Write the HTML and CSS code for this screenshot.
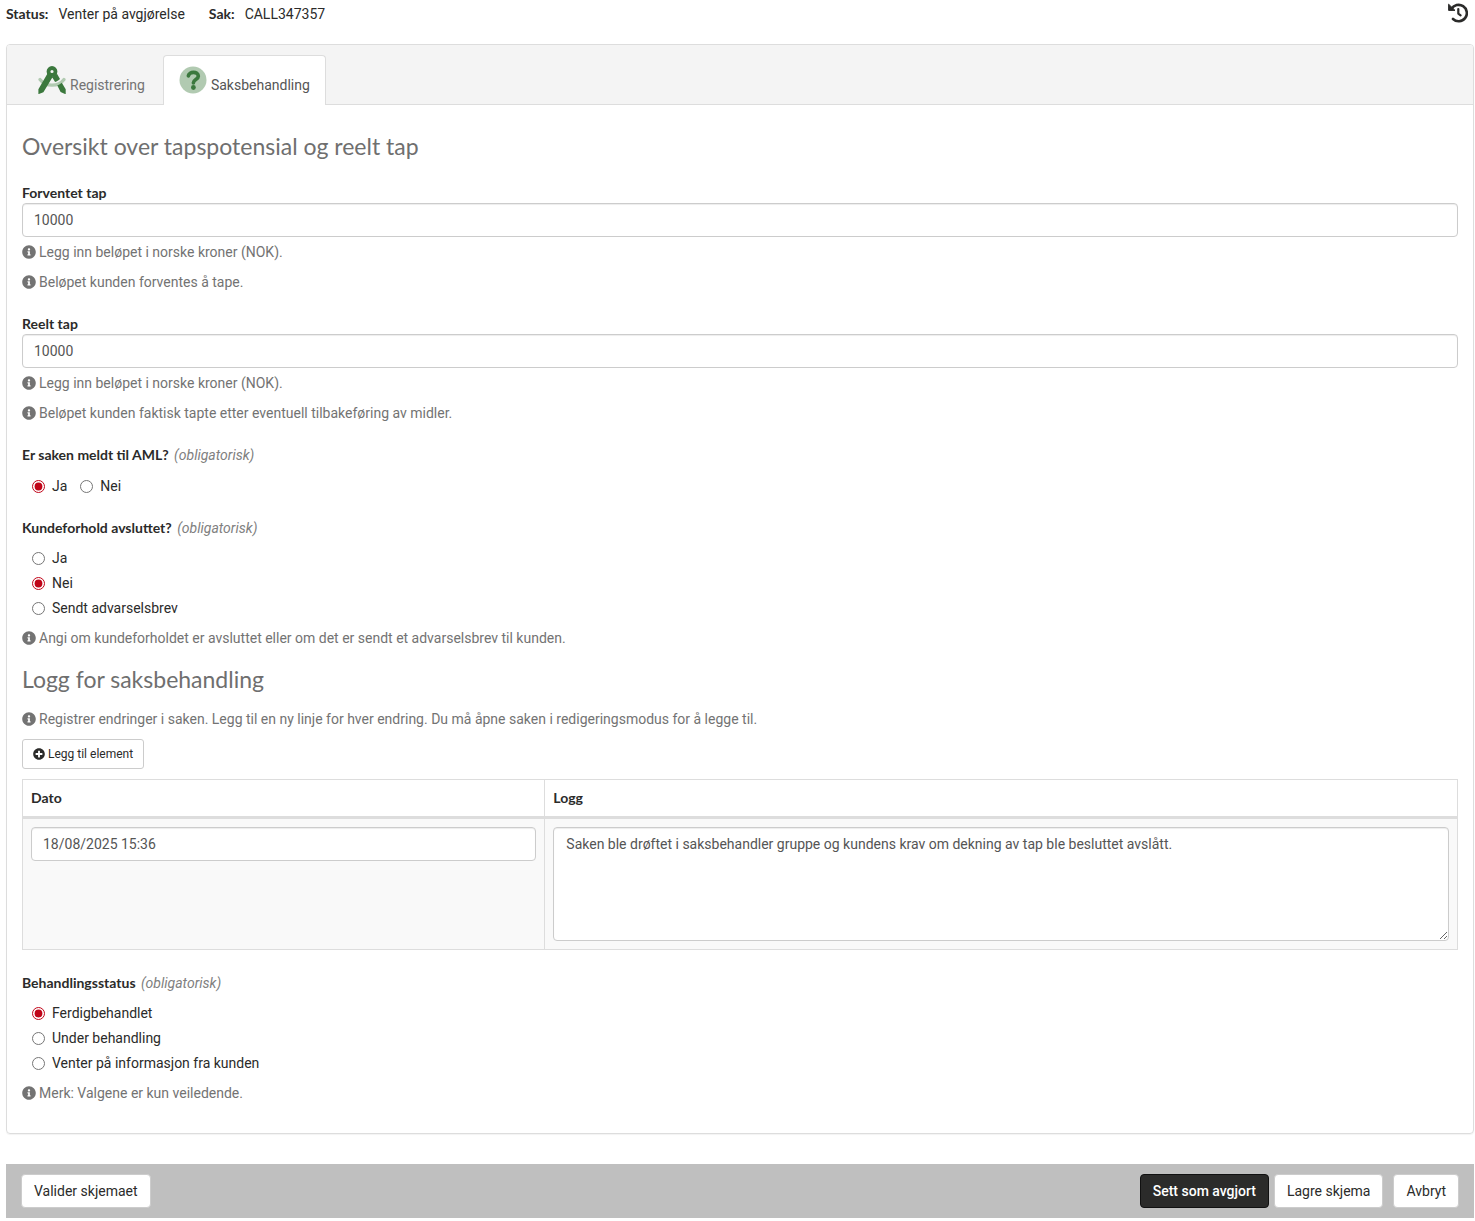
FILE: index.html
```html
<!DOCTYPE html>
<html lang="no">
<head>
    <meta charset="UTF-8">
    <meta name="viewport" content="width=device-width, initial-scale=1.0">
    <title>Saksbehandling</title>
    <link rel="stylesheet" href="styles.css">
</head>
<body>
    <!-- Shared icons -->
    <svg class="sprite" aria-hidden="true">
        <symbol id="icon-info" viewBox="0 0 512 512">
            <path d="M256 8C119.043 8 8 119.083 8 256c0 136.997 111.043 248 248 248s248-111.003 248-248C504 119.083 392.957 8 256 8zm0 110c23.196 0 42 18.804 42 42s-18.804 42-42 42-42-18.804-42-42 18.804-42 42-42zm56 254c0 6.627-5.373 12-12 12h-88c-6.627 0-12-5.373-12-12v-24c0-6.627 5.373-12 12-12h12v-64h-12c-6.627 0-12-5.373-12-12v-24c0-6.627 5.373-12 12-12h64c6.627 0 12 5.373 12 12v100h12c6.627 0 12 5.373 12 12v24z"/>
        </symbol>
    </svg>

    <header class="case-header">
        <dl class="case-info">
            <div><dt>Status:</dt><dd>Venter på avgjørelse</dd></div>
            <div><dt>Sak:</dt><dd>CALL347357</dd></div>
        </dl>
        <button type="button" class="history-btn" aria-label="Historikk">
            <svg viewBox="0 0 20 20" width="20" height="20" fill="none" stroke="currentColor">
                <path d="M3.4 6.2A8.2 8.2 0 1 1 5 16" stroke-width="2.6" stroke-linecap="round"/>
                <path d="M10.3 6v4.6l2.3 1.8" stroke-width="2.2" stroke-linecap="round" stroke-linejoin="round"/>
                <path d="M.6 1.2v6.2h6.4z" fill="currentColor" stroke-width="1" stroke-linejoin="round"/>
            </svg>
        </button>
    </header>

    <form>
        <main class="panel">
            <nav class="tabs">
                <a href="#registrering" class="tab">
                    <svg viewBox="0 0 28 28" width="28" height="28" fill="none" stroke="#3b783d">
                        <path d="M2 13.500C7.500 21 20.500 21 26 13.500" stroke="#b1cab1" stroke-width="3.200" stroke-linecap="round"/>
                        <circle cx="14" cy="5.500" r="3.500" stroke-width="3.800"/>
                        <path d="M9.500 7.500l5.300 3.300L5.400 26.200.4 28.200v-5zM14 11l5-3.200 3 5.200c-1.500 1.500-3 2.400-4.900 3zM19.300 19.500c1.700-.6 3.200-1.500 4.500-2.700l3.900 6.500v5L22.600 26z" fill="#3b783d" stroke="none"/>
                    </svg>
                    <span>Registrering</span>
                </a>
                <a href="#saksbehandling" class="tab active" aria-current="page">
                    <svg viewBox="0 0 28 28" width="28" height="28" fill="none">
                        <circle cx="14" cy="14" r="13.500" fill="#b1cab1"/>
                        <path d="M9.400 9.800C9.900 5.200 19.300 5.200 19.300 10.200c0 3.400-4.900 3.200-4.900 6.600" stroke="#3b783d" stroke-width="3.700" stroke-linecap="round"/>
                        <circle cx="14.400" cy="21.500" r="2.400" fill="#3b783d"/>
                    </svg>
                    <span>Saksbehandling</span>
                </a>
            </nav>

            <div class="panel-body">
                <h2>Oversikt over tapspotensial og reelt tap</h2>

                <div class="form-group">
                    <label for="forventet-tap">Forventet tap</label>
                    <input type="text" id="forventet-tap" class="form-control" value="10000">
                    <p class="help"><svg class="icon"><use href="#icon-info"/></svg>Legg inn beløpet i norske kroner (NOK).</p>
                    <p class="help"><svg class="icon"><use href="#icon-info"/></svg>Beløpet kunden forventes å tape.</p>
                </div>

                <div class="form-group">
                    <label for="reelt-tap">Reelt tap</label>
                    <input type="text" id="reelt-tap" class="form-control" value="10000">
                    <p class="help"><svg class="icon"><use href="#icon-info"/></svg>Legg inn beløpet i norske kroner (NOK).</p>
                    <p class="help"><svg class="icon"><use href="#icon-info"/></svg>Beløpet kunden faktisk tapte etter eventuell tilbakeføring av midler.</p>
                </div>

                <fieldset class="form-group">
                    <legend>Er saken meldt til AML? <em>(obligatorisk)</em></legend>
                    <div class="radios inline">
                        <label><input type="radio" name="aml" checked>Ja</label>
                        <label><input type="radio" name="aml">Nei</label>
                    </div>
                </fieldset>

                <fieldset class="form-group">
                    <legend>Kundeforhold avsluttet? <em>(obligatorisk)</em></legend>
                    <div class="radios">
                        <label><input type="radio" name="kundeforhold">Ja</label>
                        <label><input type="radio" name="kundeforhold" checked>Nei</label>
                        <label><input type="radio" name="kundeforhold">Sendt advarselsbrev</label>
                    </div>
                    <p class="help"><svg class="icon"><use href="#icon-info"/></svg>Angi om kundeforholdet er avsluttet eller om det er sendt et advarselsbrev til kunden.</p>
                </fieldset>

                <h2 class="log-title">Logg for saksbehandling</h2>
                <p class="help log-help"><svg class="icon"><use href="#icon-info"/></svg>Registrer endringer i saken. Legg til en ny linje for hver endring. Du må åpne saken i redigeringsmodus for å legge til.</p>
                <button type="button" class="btn btn-small">
                    <svg class="icon" viewBox="0 0 512 512"><path d="M256 8C119 8 8 119 8 256s111 248 248 248 248-111 248-248S393 8 256 8zm144 276c0 6.600-5.400 12-12 12h-92v92c0 6.600-5.400 12-12 12h-56c-6.600 0-12-5.400-12-12v-92h-92c-6.600 0-12-5.400-12-12v-56c0-6.600 5.400-12 12-12h92v-92c0-6.600 5.400-12 12-12h56c6.600 0 12 5.400 12 12v92h92c6.600 0 12 5.400 12 12v56z"/></svg>Legg til element
                </button>

                <table class="log-table">
                    <thead>
                        <tr>
                            <th class="col-date" id="col-dato">Dato</th>
                            <th id="col-logg">Logg</th>
                        </tr>
                    </thead>
                    <tbody>
                        <tr>
                            <td><input type="text" class="form-control" aria-labelledby="col-dato" value="18/08/2025 15:36"></td>
                            <td><textarea class="form-control" rows="5" aria-labelledby="col-logg">Saken ble drøftet i saksbehandler gruppe og kundens krav om dekning av tap ble besluttet avslått.</textarea></td>
                        </tr>
                    </tbody>
                </table>

                <fieldset class="form-group">
                    <legend>Behandlingsstatus <em>(obligatorisk)</em></legend>
                    <div class="radios">
                        <label><input type="radio" name="status" checked>Ferdigbehandlet</label>
                        <label><input type="radio" name="status">Under behandling</label>
                        <label><input type="radio" name="status">Venter på informasjon fra kunden</label>
                    </div>
                    <p class="help"><svg class="icon"><use href="#icon-info"/></svg>Merk: Valgene er kun veiledende.</p>
                </fieldset>
            </div>
        </main>

        <footer class="action-bar">
            <button type="button" class="btn">Valider skjemaet</button>
            <div class="actions">
                <button type="submit" class="btn btn-primary">Sett som avgjort</button>
                <button type="button" class="btn">Lagre skjema</button>
                <button type="button" class="btn btn-cancel">Avbryt</button>
            </div>
        </footer>
    </form>
</body>
</html>
```
FILE: styles.css
```css
* {
    box-sizing: border-box;
}

body {
    font-family: Roboto, "Open Sans", sans-serif;
    font-size: 14px;
    line-height: 20px;
    color: #2b2b2a;
    background-color: #fff;
    margin: 0;
    padding: 0 1px 3px 6px;
}

.sprite {
    display: none;
}

.case-header {
    display: flex;
    justify-content: space-between;
    padding: 3px 6px 20px 0;
}

.case-info {
    display: flex;
    gap: 24px;
    margin: 1px 0 0;
}

.case-info div {
    display: flex;
    gap: 10px;
}

.case-info dt {
    font-family: Lato, sans-serif;
    font-weight: bold;
}

.case-info dd {
    margin: 0;
}

.history-btn {
    display: block;
    height: 20px;
    padding: 0;
    border: none;
    background: none;
    color: #2b2b2a;
    cursor: pointer;
}

.panel {
    border: 1px solid #ddd;
    border-radius: 4px;
    box-shadow: 0 1px 1px rgba(0, 0, 0, 0.05);
}

/* Tabs */
.tabs {
    display: flex;
    gap: 2px;
    padding: 10px 15px 0;
    background-color: #f4f4f4;
    border-bottom: 1px solid #ddd;
    border-radius: 3px 3px 0 0;
}

.tab {
    display: flex;
    align-items: flex-start;
    gap: 4px;
    height: 50px;
    margin-bottom: -1px;
    padding: 10px 15px 0;
    border: 1px solid transparent;
    border-bottom: none;
    border-radius: 4px 4px 0 0;
    color: #737373;
    text-decoration: none;
}

.tab span {
    padding-top: 9px;
}

.tab.active {
    background-color: #fff;
    border-color: #ddd;
    color: #555;
}

/* Form */
.panel-body {
    padding: 28px 15px 30px;
}

h2 {
    margin: 0 0 24px;
    font-family: Lato, sans-serif;
    font-size: 23px;
    line-height: 26px;
    font-weight: normal;
    color: #6f6f6f;
}

.form-group {
    margin: 0 0 22px;
    padding: 0;
    border: none;
    min-width: 0;
}

.form-group:last-child {
    margin-bottom: 0;
}

.form-group > label,
legend {
    display: block;
    padding: 0;
    font-family: Lato, sans-serif;
    font-weight: bold;
}

legend em {
    margin-left: 2px;
    font-family: Roboto, sans-serif;
    font-weight: normal;
    color: #808080;
}

.form-control {
    display: block;
    width: 100%;
    height: 34px;
    padding: 6px 11px;
    font: inherit;
    color: #555;
    background-color: #fff;
    border: 1px solid #ccc;
    border-radius: 4px;
    box-shadow: inset 0 1px 1px rgba(0, 0, 0, 0.075);
}

textarea.form-control {
    height: 114px;
    padding: 6px 12px;
    resize: vertical;
}

.help {
    margin: 10px 0 0;
    color: #737373;
}

.form-control + .help {
    margin-top: 5px;
}

.icon {
    width: 14px;
    height: 14px;
    margin-right: 3px;
    vertical-align: -2px;
    fill: currentColor;
}

.radios {
    display: flex;
    flex-direction: column;
    align-items: flex-start;
    gap: 5px;
    padding: 10px 0 0 10px;
}

.radios.inline {
    flex-direction: row;
    gap: 13px;
    padding-top: 11px;
}

.radios label {
    display: flex;
    align-items: center;
    gap: 7px;
}

.radios input {
    width: 13px;
    height: 13px;
    margin: 1px 0 0;
    accent-color: #c00418;
}

.log-title {
    margin: -4px 0 17px;
}

.log-help {
    margin: 0 0 10px;
}

/* Log table */
.log-table {
    width: 100%;
    margin: 10px 0 23px;
    border-collapse: collapse;
}

.log-table th,
.log-table td {
    padding: 8px;
    border: 1px solid #ddd;
    text-align: left;
    vertical-align: top;
}

.log-table th {
    font-family: Lato, sans-serif;
    border-bottom: 3px solid #ddd;
}

.log-table td {
    background-color: #f9f9f9;
}

.col-date {
    width: 36.4%;
}

/* Buttons */
.btn {
    padding: 6px 12px;
    font: inherit;
    color: #2b2b2a;
    background-color: #fff;
    border: 1px solid #ccc;
    border-radius: 4px;
    cursor: pointer;
}

.btn-small {
    display: block;
    padding: 5px 10px;
    font-size: 12px;
    line-height: 18px;
    border-radius: 3px;
}

.btn-small .icon {
    width: 12px;
    height: 12px;
}

.btn-primary {
    font-weight: 500;
    color: #fff;
    background-color: #2b2b2a;
    border-color: #111;
}

.action-bar {
    display: flex;
    justify-content: space-between;
    margin-top: 30px;
    padding: 10px 15px;
    background-color: #bfbfbf;
}

.actions {
    display: flex;
    gap: 5px;
}

.btn-cancel {
    margin-left: 5px;
}
```
